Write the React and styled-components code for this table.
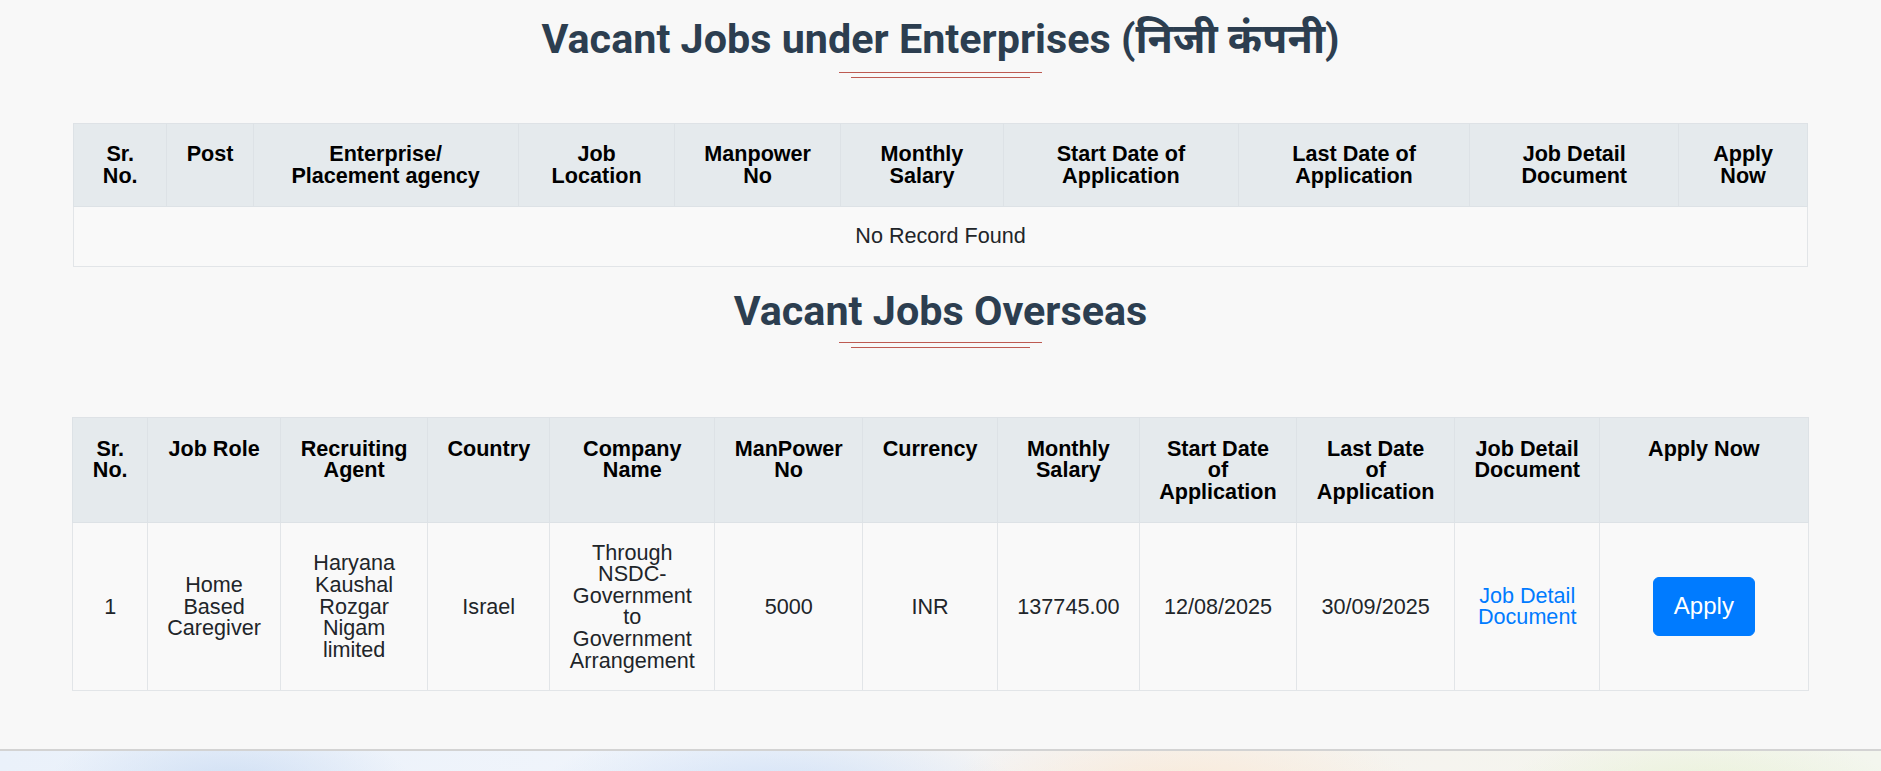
import React from "react";
import styled, { createGlobalStyle } from "styled-components";

const GlobalStyle = createGlobalStyle`
  html, body { margin: 0; padding: 0; }
  body {
    background: #f8f8f8;
    font-family: "Liberation Sans", Arial, "Noto Sans Devanagari", "Lohit Devanagari", sans-serif;
    color: #212529;
  }
`;

const Page = styled.main`
  padding-top: 15px;
`;

const Container = styled.div`
  width: 1734px;
  margin: 0 auto;
`;

const Section = styled.section`
  display: flex;
  flex-direction: column;
  align-items: center;
  margin-top: ${(p) => p.$gap || 0}px;
`;

const Heading = styled.h2`
  margin: 0;
  font-family: Roboto, "Liberation Sans", "Noto Sans Devanagari", "Lohit Devanagari", sans-serif;
  font-weight: 700;
  font-size: 41.3px;
  line-height: 1.2;
  color: #2c3e50;
  text-align: center;
`;

const Divider = styled.div`
  display: flex;
  flex-direction: column;
  align-items: center;
  gap: 4px;
  margin-top: ${(p) => p.$top}px;
`;

const Rule = styled.span`
  display: block;
  width: ${(p) => p.$w}px;
  height: 1px;
  background: #bd5a52;
`;

const Table = styled.table`
  width: 100%;
  table-layout: fixed;
  border-collapse: collapse;
  margin-top: ${(p) => p.$top}px;
  background: #f9f9f9;
  border: 1px solid #dee2e6;
`;

const Col = styled.col`
  width: ${(p) => p.$w}px;
`;

const Th = styled.th`
  background: #e5eaed;
  color: #000;
  font-weight: 700;
  font-size: 21.6px;
  line-height: 21.6px;
  padding: 19.2px;
  text-align: center;
  vertical-align: top;
  border: 1px solid #dde2e6;
  border-top: none;
`;

const Td = styled.td`
  font-size: 21.6px;
  line-height: 21.6px;
  padding: 19.2px;
  text-align: center;
  vertical-align: middle;
  color: #212529;
  border: 1px solid #e2e5e8;
`;

const EmptyCell = styled(Td)`
  padding: 18.8px 19.2px;
`;

const DocLink = styled.a`
  color: #007bff;
  text-decoration: none;
`;

const ApplyButton = styled.button`
  font-family: "Liberation Sans", Arial, sans-serif;
  font-size: 24px;
  line-height: 36px;
  padding: 10.5px 20px;
  color: #fff;
  background: #007bff;
  border: 1px solid #007bff;
  border-radius: 6px;
  cursor: pointer;
`;

const Footer = styled.footer`
  margin-top: 58px;
  height: 160px;
  border-top: 2px solid #d3d3d3;
  background:
    radial-gradient(ellipse 180px 60px at 230px 30px, rgba(200, 218, 242, 0.75), transparent),
    radial-gradient(ellipse 240px 70px at 780px 40px, rgba(205, 222, 245, 0.85), transparent),
    radial-gradient(ellipse 240px 70px at 1180px 40px, rgba(250, 230, 208, 0.75), transparent),
    radial-gradient(ellipse 200px 60px at 1700px 40px, rgba(230, 240, 210, 0.75), transparent),
    linear-gradient(90deg, #eaf1fa 0%, #f1f5fb 40%, #f6f3ef 65%, #f3f6ee 100%);
`;

const table1Cols = [93.6, 86.1, 265.2, 156.7, 165.4, 163.3, 234.5, 231.8, 208.7, 129];
const table1Heads = [
  "Sr. No.",
  "Post",
  <>Enterprise/<br />Placement agency</>,
  "Job Location",
  "Manpower No",
  "Monthly Salary",
  "Start Date of Application",
  "Last Date of Application",
  "Job Detail Document",
  "Apply Now",
];

const table2Cols = [74.7, 133.1, 147, 122.3, 164.7, 148.1, 134.7, 142, 157.1, 158.3, 144.8, 208.6];
const table2Heads = [
  "Sr. No.",
  "Job Role",
  "Recruiting Agent",
  "Country",
  "Company Name",
  "ManPower No",
  "Currency",
  "Monthly Salary",
  "Start Date of Application",
  "Last Date of Application",
  "Job Detail Document",
  "Apply Now",
];

const overseasRows = [
  {
    sr: "1",
    role: "Home Based Caregiver",
    agent: "Haryana Kaushal Rozgar Nigam limited",
    country: "Israel",
    company: "Through NSDC-Government to Government Arrangement",
    manpower: "5000",
    currency: "INR",
    salary: "137745.00",
    start: "12/08/2025",
    last: "30/09/2025",
  },
];

function SectionTitle({ children, top }) {
  return (
    <>
      <Heading>{children}</Heading>
      <Divider $top={top}>
        <Rule $w={203} />
        <Rule $w={179} />
      </Divider>
    </>
  );
}

export default function App() {
  return (
    <>
      <GlobalStyle />
      <Page>
        <Container>
          <Section>
            <SectionTitle top={7}>Vacant Jobs under Enterprises (निजी कंपनी)</SectionTitle>
            <Table $top={45.5}>
              <colgroup>
                {table1Cols.map((w, i) => (
                  <Col key={i} $w={w} />
                ))}
              </colgroup>
              <thead>
                <tr>
                  {table1Heads.map((h, i) => (
                    <Th key={i}>{h}</Th>
                  ))}
                </tr>
              </thead>
              <tbody>
                <tr>
                  <EmptyCell colSpan={10}>No Record Found</EmptyCell>
                </tr>
              </tbody>
            </Table>
          </Section>

          <Section $gap={20}>
            <SectionTitle top={6}>Vacant Jobs Overseas</SectionTitle>
            <Table $top={69}>
              <colgroup>
                {table2Cols.map((w, i) => (
                  <Col key={i} $w={w} />
                ))}
              </colgroup>
              <thead>
                <tr>
                  {table2Heads.map((h, i) => (
                    <Th key={i}>{h}</Th>
                  ))}
                </tr>
              </thead>
              <tbody>
                {overseasRows.map((r) => (
                  <tr key={r.sr}>
                    <Td>{r.sr}</Td>
                    <Td>{r.role}</Td>
                    <Td>{r.agent}</Td>
                    <Td>{r.country}</Td>
                    <Td>{r.company}</Td>
                    <Td>{r.manpower}</Td>
                    <Td>{r.currency}</Td>
                    <Td>{r.salary}</Td>
                    <Td>{r.start}</Td>
                    <Td>{r.last}</Td>
                    <Td>
                      <DocLink href="#">Job Detail Document</DocLink>
                    </Td>
                    <Td>
                      <ApplyButton type="button">Apply</ApplyButton>
                    </Td>
                  </tr>
                ))}
              </tbody>
            </Table>
          </Section>
        </Container>
        <Footer />
      </Page>
    </>
  );
}
